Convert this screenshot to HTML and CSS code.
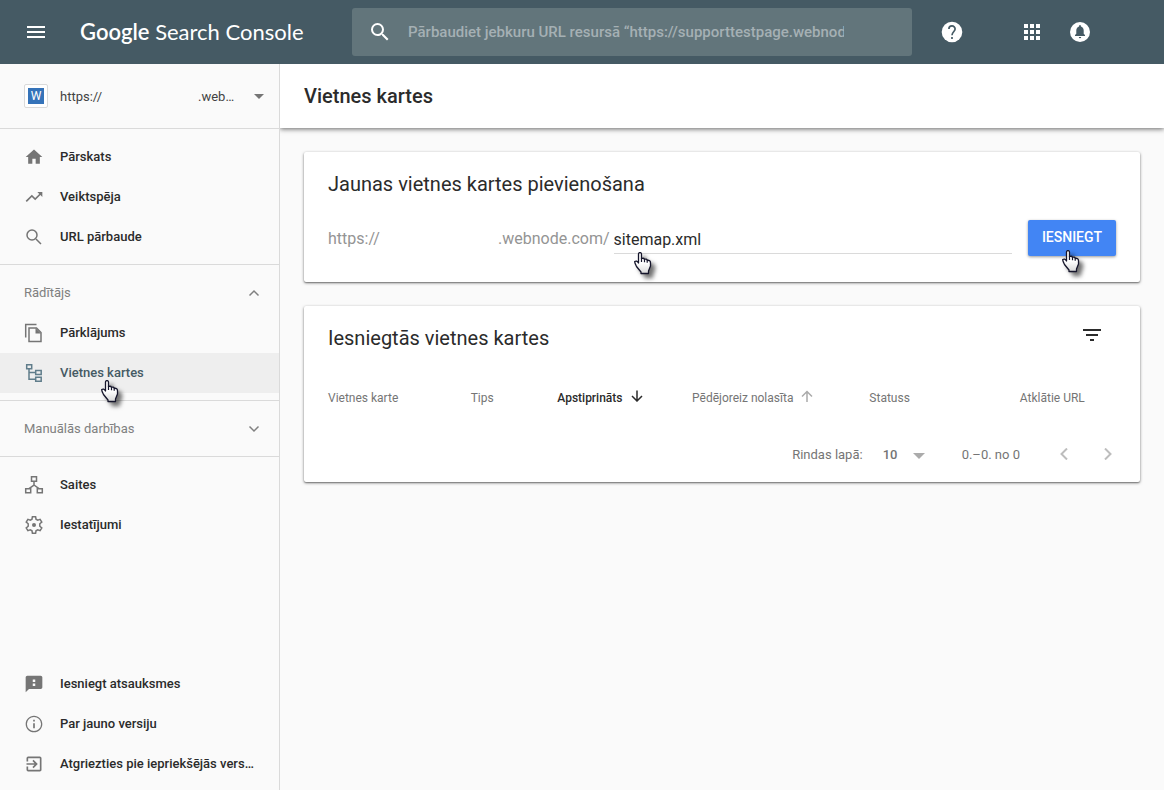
FILE: index.html
```html
<!DOCTYPE html>
<html lang="lv">
<head>
<meta charset="utf-8">
<meta name="viewport" content="width=device-width, initial-scale=1">
<title>Vietnes kartes</title>
<link rel="stylesheet" href="styles.css">
</head>
<body>
<svg class="defs" aria-hidden="true">
  <defs>
    <linearGradient id="skin" x1="0" y1="0" x2="0" y2="1">
      <stop offset="0.5" stop-color="#fff"/>
      <stop offset="1" stop-color="#d8d8d8"/>
    </linearGradient>
    <symbol id="hand" viewBox="0 0 20 24">
      <path d="M4.500 11V2Q4.500.6 6 .6T7.500 2V6.500Q9.800 5.700 10.500 7.300Q12.600 6.500 13.200 8.300Q16.500 8 16.500 11V14L14.500 19V21.500H7V20L2.500 14.500Q.5 10.500 .7 9.600Q2.600 8 4.500 11Z" fill="url(#skin)" stroke="#15152b" stroke-width="1.300" stroke-linejoin="round"/>
      <path d="M7.500 6v4M10.500 7.300v3M13.200 8.300v2.500" fill="none" stroke="#15152b" stroke-width="1.200"/>
    </symbol>
  </defs>
</svg>
<header class="topbar">
  <button class="icon-btn menu" aria-label="Izvēlne"><svg width="24" height="24" viewBox="0 0 24 24"><path d="M3 18h18v-2H3v2zm0-5h18v-2H3v2zm0-7v2h18V6H3z"/></svg></button>
  <a class="brand" href="#"><span class="brand-main">Google</span> Search Console</a>
  <form class="search">
    <svg width="24" height="24" viewBox="0 0 24 24"><path d="M15.500 14h-.79l-.28-.27A6.471 6.471 0 0 0 16 9.500 6.500 6.500 0 1 0 9.500 16c1.610 0 3.090-.59 4.230-1.570l.27.28v.79l5 4.990L20.490 19l-4.990-5zm-6 0C7.010 14 5 11.990 5 9.500S7.010 5 9.500 5 14 7.010 14 9.500 11.990 14 9.500 14z"/></svg>
    <input class="search-input" type="text" aria-label="Pārbaudiet URL" placeholder="Pārbaudiet jebkuru URL resursā “https://supporttestpage.webnode.com/”">
  </form>
  <div class="tools">
    <button class="icon-btn help" aria-label="Palīdzība"><svg width="24" height="24" viewBox="0 0 24 24"><circle cx="12" cy="12" r="10.300"/><path class="cut" d="M8.900 9A3.100 3.100 0 0 1 12 5.900 3.100 3.100 0 0 1 15.100 9C15.100 11.600 12 12 12 15.200"/><path class="cut" d="M12 17v2"/></svg></button>
    <button class="icon-btn" aria-label="Lietotnes"><svg width="24" height="24" viewBox="0 0 24 24"><path d="M4 4h4v4H4zM10 4h4v4h-4zM16 4h4v4h-4zM4 10h4v4H4zM10 10h4v4h-4zM16 10h4v4h-4zM4 16h4v4H4zM10 16h4v4h-4zM16 16h4v4h-4z"/></svg></button>
    <button class="icon-btn" aria-label="Paziņojumi"><svg width="24" height="24" viewBox="0 0 24 24"><circle cx="12" cy="12" r="10"/><path fill="#455a64" d="M7 16v-1l1.300-1.200V10.500C8.300 8.500 9.400 7 11.100 6.500V6a.9.9 0 0 1 1.800 0v.5c1.700.5 2.800 2 2.800 4v3.300L17 15v1zM10.800 17h2.400a1.200 1.200 0 0 1-2.400 0z"/></svg></button>
  </div>
</header>
<div class="shell">
  <aside class="sidebar">
    <button class="property">
      <span class="favicon"><span class="favicon-mark">W</span></span>
      <span class="property-scheme">https://</span>
      <span class="property-host">.web…</span>
      <svg class="caret" width="10" height="5" viewBox="0 0 10 5"><path d="M0 0h10L5 5z"/></svg>
    </button>
    <nav class="nav">
      <div class="group">
        <a class="item" href="#"><svg width="20" height="20" viewBox="0 0 24 24"><path d="M10 20v-6h4v6h5v-8h3L12 3 2 12h3v8z"/></svg>Pārskats</a>
        <a class="item" href="#"><svg width="20" height="20" viewBox="0 0 24 24"><path d="M16 6l2.290 2.290-4.880 4.880-4-4L2 16.590 3.410 18l6-6 4 4 6.300-6.290L22 12V6z"/></svg>Veiktspēja</a>
        <a class="item" href="#"><svg class="line" width="20" height="20" viewBox="0 0 20 20"><circle cx="8" cy="8" r="5"/><path d="M12 12l5 5"/></svg>URL pārbaude</a>
      </div>
      <div class="group">
        <button class="group-title">Rādītājs<svg class="line" width="12" height="12" viewBox="0 0 12 12"><path d="M1.500 8.500L6 4l4.500 4.500"/></svg></button>
        <a class="item" href="#"><svg class="line" width="20" height="20" viewBox="0 0 20 20"><path d="M1.700 14.500V1.500H12.500M5 5h7.500L17 9.500v9H5z"/><path class="solid" d="M11.500 5l5.500 5.500h-5.500z"/></svg>Pārklājums</a>
        <a class="item active" href="#" aria-current="page"><svg class="line" width="20" height="20" viewBox="0 0 20 20"><path d="M2.700 1.700h5v4h-5zM11.700 7.500h5.500v4h-5.500zM11.700 14.300h5.500v4h-5.500zM5 5.700v10.600h6.700M5 9.500h6.700"/></svg>Vietnes kartes<svg class="pointer" width="20" height="24"><use href="#hand"/></svg></a>
      </div>
      <div class="group">
        <button class="group-title">Manuālās darbības<svg class="line" width="12" height="12" viewBox="0 0 12 12"><path d="M1.500 3.500L6 8l4.500-4.500"/></svg></button>
      </div>
      <div class="group">
        <a class="item" href="#"><svg class="line" width="20" height="20" viewBox="0 0 20 20"><path d="M7.500 1.700h5v4.500h-5zM1.700 13.700h5v4h-5zM13.300 13.700h5v4h-5zM10 6.200V10l-5 3.700M10 10l5 3.700"/></svg>Saites</a>
        <a class="item" href="#"><svg class="line" width="20" height="20" viewBox="0 0 20 20"><path d="M8 4.200L8.400 1.700h3.200l.4 2.500 1.700 1 2.400-.9 1.700 2.800-2 1.700v2.400l2 1.700-1.700 2.800-2.400-.9-1.700 1-.4 2.500H8.400L8 15.800l-1.700-1-2.400.9-1.700-2.800 2-1.700V8.800l-2-1.700 1.700-2.800 2.400.9z"/><circle class="solid" cx="10" cy="10" r="2"/></svg>Iestatījumi</a>
      </div>
      <div class="group footer">
        <a class="item" href="#"><svg width="20" height="20" viewBox="0 0 24 24"><path d="M20 2H4c-1.100 0-2 .9-2 2v18l4-4h14c1.100 0 2-.9 2-2V4c0-1.100-.9-2-2-2zm-6.500 12.500h-3v-3h3v3zm0-5h-3v-3h3v3z"/></svg>Iesniegt atsauksmes</a>
        <a class="item" href="#"><svg width="20" height="20" viewBox="0 0 24 24"><path d="M11 17h2v-6h-2v6zm1-15C6.480 2 2 6.480 2 12s4.480 10 10 10 10-4.480 10-10S17.520 2 12 2zm0 18.500A8.500 8.500 0 1 1 12 3.500a8.500 8.500 0 0 1 0 17zM11 9h2V7h-2v2z"/></svg>Par jauno versiju</a>
        <a class="item" href="#"><svg width="20" height="20" viewBox="0 0 24 24"><path d="M10.090 15.590L11.500 17l5-5-5-5-1.410 1.410L12.670 11H3v2h9.670l-2.580 2.590zM19 3H5a2 2 0 0 0-2 2v4h2V5h14v14H5v-4H3v4a2 2 0 0 0 2 2h14c1.100 0 2-.9 2-2V5c0-1.100-.9-2-2-2z"/></svg>Atgriezties pie iepriekšējās vers…</a>
      </div>
    </nav>
  </aside>
  <main class="main">
    <div class="page-head"><h1 class="page-title">Vietnes kartes</h1></div>
    <div class="content">
      <section class="card">
        <h2 class="card-title">Jaunas vietnes kartes pievienošana</h2>
        <form class="add">
          <label class="prefix" for="sitemap"><span class="prefix-scheme">https://</span><span>.webnode.com/</span></label>
          <div class="field"><input class="field-input" id="sitemap" type="text" value="sitemap.xml"><svg class="pointer" width="20" height="24"><use href="#hand"/></svg></div>
          <button class="submit" type="button">IESNIEGT<svg class="pointer" width="20" height="24"><use href="#hand"/></svg></button>
        </form>
      </section>
      <section class="card list">
        <div class="card-head">
          <h2 class="card-title">Iesniegtās vietnes kartes</h2>
          <button class="icon-btn filter" aria-label="Filtrēt"><svg width="24" height="24" viewBox="0 0 24 24"><path d="M10 18h4v-2h-4v2zM3 6v2h18V6H3zm3 7h12v-2H6v2z"/></svg></button>
        </div>
        <table class="table">
          <colgroup><col class="c-map"><col class="c-type"><col class="c-sent"><col class="c-read"><col class="c-status"><col class="c-urls"></colgroup>
          <thead><tr>
            <th>Vietnes karte</th>
            <th>Tips</th>
            <th class="sorted" aria-sort="descending">Apstiprināts<svg class="sort" width="12" height="12" viewBox="0 0 12 12"><path d="M6 .5v10.500M1 6l5 5 5-5"/></svg></th>
            <th>Pēdējoreiz nolasīta<svg class="sort faint" width="12" height="12" viewBox="0 0 12 12"><path d="M6 12V1.500M1 6.500l5-5 5 5"/></svg></th>
            <th>Statuss</th>
            <th>Atklātie URL</th>
          </tr></thead>
        </table>
        <div class="pager">
          <label for="rows">Rindas lapā:</label>
          <span class="rows"><select class="rows-select" id="rows"><option>10</option><option>25</option><option>50</option></select><svg class="caret light" width="12" height="6" viewBox="0 0 12 6"><path d="M0 0h12L6 6z"/></svg></span>
          <span class="range">0.–0. no 0</span>
          <span class="steps">
            <button class="step" aria-label="Iepriekšējā lapa"><svg width="12" height="12" viewBox="0 0 12 12"><path d="M9 .5L3.500 6 9 11.500"/></svg></button>
            <button class="step" aria-label="Nākamā lapa"><svg width="12" height="12" viewBox="0 0 12 12"><path d="M3 .5L8.500 6 3 11.500"/></svg></button>
          </span>
        </div>
      </section>
    </div>
  </main>
</div>
</body>
</html>
```
FILE: styles.css
```css
* { box-sizing: border-box; }

body {
  margin: 0;
  min-height: 100vh;
  display: flex;
  flex-direction: column;
  background: #fafafa;
  color: #2b2b2b;
  font-family: Roboto, "Noto Sans", sans-serif;
  font-size: 13px;
}

button, input, select { font: inherit; color: inherit; border: 0; padding: 0; background: none; }
button { cursor: pointer; }
a { color: inherit; text-decoration: none; }
h1, h2 { margin: 0; }
svg { flex: none; fill: currentColor; }
.defs { position: absolute; width: 0; height: 0; }

.line { fill: none; stroke: currentColor; stroke-width: 1.5; }
.line .solid { fill: currentColor; stroke: none; }
.icon-btn { display: flex; }

.pointer {
  position: absolute;
  z-index: 1;
  overflow: visible;
  pointer-events: none;
  filter: drop-shadow(4px 4px 2px rgba(0, 0, 0, 0.55));
}

/* Top bar */
.topbar {
  display: flex;
  align-items: center;
  height: 64px;
  padding: 0 72px 0 24px;
  background: #455a64;
  color: #fff;
}
.brand {
  width: 272px;
  margin-left: 32px;
  flex: none;
  font-family: Lato, sans-serif;
  font-size: 22px;
  line-height: 32px;
  white-space: nowrap;
}
.brand-main { font-weight: 600; }
.search {
  flex: 1;
  display: flex;
  align-items: center;
  height: 48px;
  padding: 0 68px 0 16px;
  gap: 16px;
  border-radius: 3px;
  background: #62757b;
}
.search-input { flex: 1; min-width: 0; height: 24px; font-size: 15px; font-weight: 500; outline: 0; }
.search-input::placeholder { color: #a5b0b4; opacity: 1; }
.tools { display: flex; gap: 24px; margin-left: 28px; }
.help { margin-right: 32px; }
.cut { fill: none; stroke: #455a64; stroke-width: 1.7; }

/* Side navigation */
.shell { flex: 1; display: flex; }
.sidebar {
  display: flex;
  flex-direction: column;
  width: 280px;
  flex: none;
  border-right: 1px solid #dadada;
}
.property {
  display: flex;
  align-items: center;
  height: 65px;
  padding: 0 15px 0 24px;
  border-bottom: 1px solid #dadada;
  color: #424242;
  text-align: left;
}
.favicon { padding: 3px; border: 1px solid #dadada; border-radius: 2px; background: #fff; }
.favicon-mark {
  display: block;
  width: 16px;
  height: 16px;
  background: #3573b9;
  color: #fff;
  font-size: 12px;
  line-height: 17px;
  text-align: center;
}
.property-scheme { width: 138px; margin-left: 12px; }
.property-host { flex: 1; }
.caret { color: #757575; }
.caret.light { color: #ababab; }
.nav { flex: 1; display: flex; flex-direction: column; }
.group { padding: 8px 0 7px; border-bottom: 1px solid #dadada; }
.group:nth-last-child(2) { border-bottom: 0; }
.footer { margin-top: auto; padding-bottom: 6px; border-bottom: 0; }
.item {
  position: relative;
  display: flex;
  align-items: center;
  gap: 16px;
  height: 40px;
  padding: 0 24px 2px;
  font-weight: 500;
  white-space: nowrap;
}
.item svg { margin-top: 2px; color: #757575; }
.active { background: #eee; color: #455a64; }
.active svg { color: #607d8b; }
.item .pointer { left: 101px; top: 25px; }
.group-title {
  display: flex;
  align-items: center;
  justify-content: space-between;
  width: 100%;
  height: 40px;
  padding: 0 19px 2px 24px;
  color: #808080;
}
.group-title svg { margin-top: 2px; }

/* Main column */
.main { flex: 1; min-width: 0; }
.page-head {
  display: flex;
  align-items: center;
  height: 64px;
  padding: 0 24px;
  background: #fff;
  box-shadow: 0 1px 5px rgba(0, 0, 0, 0.6);
  clip-path: inset(0 0 -8px 0);
}
.page-title { font-size: 20px; font-weight: 500; line-height: 24px; }
.content { display: flex; flex-direction: column; gap: 24px; padding: 24px; }
.card {
  padding: 20px 24px;
  border-radius: 2px;
  background: #fff;
  box-shadow: 0 1px 3px rgba(0, 0, 0, 0.5), 0 1px 1px rgba(0, 0, 0, 0.2);
}
.card-title { font-size: 20px; font-weight: 400; line-height: 24px; }
.add { display: flex; align-items: center; margin-top: 24px; padding-bottom: 6px; font-size: 16px; }
.prefix { display: flex; color: #949494; }
.prefix-scheme { width: 170px; }
.field { position: relative; flex: 1; margin: 0 16px 0 4px; }
.field-input { display: block; width: 100%; height: 32px; padding-top: 4px; border-bottom: 1px solid #dadada; outline: 0; }
.field .pointer { left: 20px; top: 30px; }
.submit {
  position: relative;
  width: 88px;
  height: 36px;
  padding-bottom: 2px;
  border-radius: 2px;
  background: #4285f4;
  color: #fff;
  font-size: 14px;
  font-weight: 500;
  box-shadow: 0 1px 3px rgba(0, 0, 0, 0.4);
}
.submit .pointer { left: 34px; top: 30px; }

.list { padding-bottom: 16px; }
.card-head { display: flex; justify-content: space-between; align-items: flex-start; }
.filter { margin: -3px 12px 0 0; }
.table { width: 100%; margin-top: 36px; table-layout: fixed; border-collapse: collapse; }
.table th {
  padding: 0;
  color: #757575;
  font-size: 12px;
  font-weight: 400;
  line-height: 24px;
  text-align: left;
  white-space: nowrap;
}
.table .sorted { color: #2b2b2b; font-weight: 500; }
.c-map { width: 18.1%; }
.c-type { width: 11%; }
.c-sent { width: 17.1%; }
.c-read { width: 22.5%; }
.c-status { width: 19.1%; }
.c-urls { width: 12.2%; }
.sort { margin-left: 8px; fill: none; stroke: currentColor; stroke-width: 1.5; }
.faint { color: #ababab; }
.pager {
  display: flex;
  align-items: center;
  justify-content: flex-end;
  height: 24px;
  margin-top: 32px;
  color: #757575;
}
.rows { display: flex; align-items: center; margin: 0 37px 0 20px; }
.rows-select { appearance: none; width: 30px; height: 24px; font-weight: 500; }
.rows .caret { margin-top: 4px; }
.range { margin-right: 38px; }
.steps { display: flex; gap: 32px; margin-right: 2px; }
.step { display: flex; }
.step svg { fill: none; stroke: #bdbdbd; stroke-width: 2; }
```
